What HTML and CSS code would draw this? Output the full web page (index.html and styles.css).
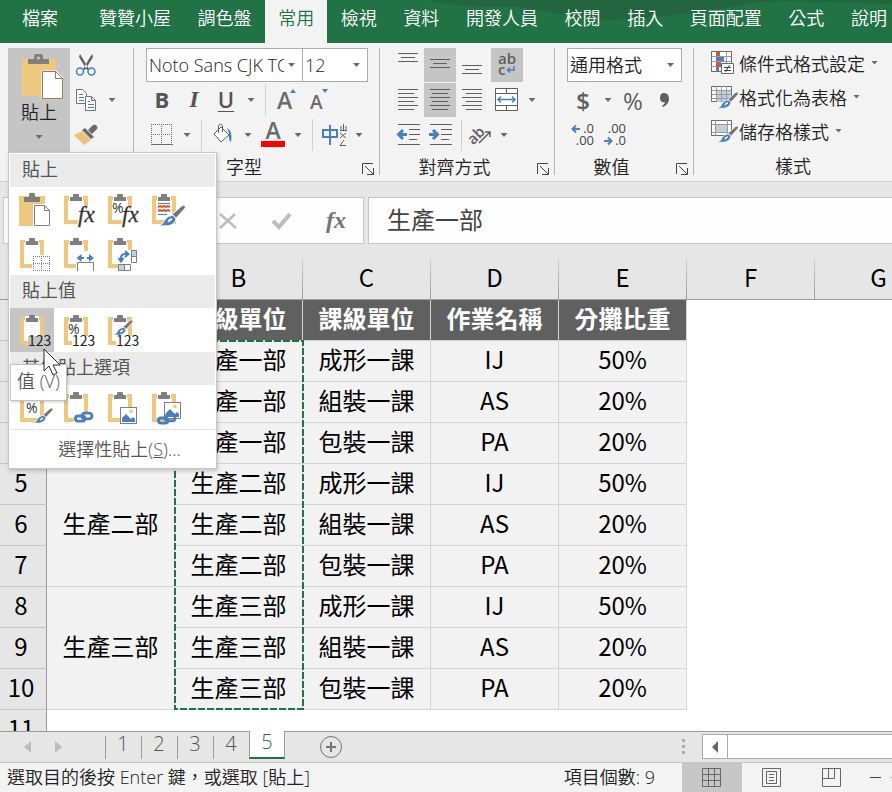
FILE: index.html
```html
<!DOCTYPE html>
<html lang="zh-Hant">

<head>
    <meta charset="UTF-8">
    <meta name="viewport" content="width=device-width, initial-scale=1.0">
    <title>Excel</title>
    <link rel="stylesheet" href="styles.css">
</head>

<body>
    <!-- shared icon parts -->
    <svg class="defs" aria-hidden="true">
        <defs>
            <g id="board">
                <path d="M12 11v24h20V11z" fill="none" stroke="#edc87e" stroke-width="4" />
                <path d="M15 8h14v7H15z" fill="#fff" />
                <path d="M16 14v-4h3V8q0-1 1-1h4q1 0 1 1v2h3v4z" fill="#7f7f7f" />
            </g>
            <g id="brush">
                <path d="M29 1l1 3L20 15l-4-4L26 2z" fill="#757575" stroke="#fff" />
                <path d="M16 12q3 0 4 4-2 6-9 7H1q6-2 7-6 3-5 8-5z" fill="#4a7fba" stroke="#fff" />
                <path d="M12 19q1-3 4-3" fill="none" stroke="#fff" stroke-width="2" />
            </g>
            <g id="chain" fill="none" stroke="#4a7fba" stroke-width="4">
                <rect x="2" y="7" width="13" height="7" rx="3.5" />
                <rect x="11" y="3" width="14" height="8" rx="4" />
            </g>
            <g id="picture">
                <rect x=".5" y=".5" width="16" height="16" fill="#fff" stroke="#7f7f7f" />
                <circle cx="11" cy="4.500" r="1.800" fill="#edc87e" />
                <path d="M2 15v-4l4-4 5 5 2-2 2 2v3z" fill="#4a7fba" />
            </g>
        </defs>
    </svg>

    <header class="tabs">
        <svg class="tabs-art" viewBox="0 0 492 43" preserveAspectRatio="none" aria-hidden="true">
            <path d="M28 0Q50 8 120 7l35 6q25 7 60 7 75-6 110-12 20-6 65-7l102 3V0z" fill="#22653f" />
        </svg>
        <a class="tab file" href="#">檔案</a>
        <nav class="tab-list">
            <a class="tab" href="#">贊贊小屋</a>
            <a class="tab" href="#">調色盤</a>
            <a class="tab active" href="#">常用</a>
            <a class="tab" href="#">檢視</a>
            <a class="tab" href="#">資料</a>
            <a class="tab" href="#">開發人員</a>
            <a class="tab" href="#">校閱</a>
            <a class="tab" href="#">插入</a>
            <a class="tab" href="#">頁面配置</a>
            <a class="tab" href="#">公式</a>
            <a class="tab" href="#">說明</a>
        </nav>
    </header>

    <section class="ribbon">
        <div class="group clipboard">
            <div class="paste-wrap">
                <button class="paste" aria-expanded="true">
                    <svg width="34" height="46" viewBox="0 0 34 46">
                        <path d="M0 5h34v37H0z" fill="#edc87e" />
                        <path d="M6 10V5h6V2q0-2 2-2h5q2 0 2 2v3h6v5z" fill="#7f7f7f" />
                        <circle cx="16.500" cy="4" r="1.500" fill="#edc87e" />
                        <path d="M19 16h15l7 7v22H19z" fill="#fff" stroke="#f3c785" />
                        <path d="M20.500 17.500h13l7 7v20h-20zM33.500 17.500v7h7" fill="#fff" stroke="#7f7f7f" />
                    </svg>
                    <span>貼上</span>
                    <i class="arrow"></i>
                </button>

                <div class="menu">
                    <h3>貼上</h3>
                    <div class="options">
                        <button aria-label="貼上"><svg width="44" height="44">
                            <path d="M9 9h26v30H9z" fill="#edc87e" />
                            <path d="M14 15v-5h5V7q0-1 1-1h4q1 0 1 1v3h5v5z" fill="#7f7f7f" />
                            <path d="M23 17h13l5 5v19H23z" fill="#fff" />
                            <path d="M24.500 18.500h10l5 5v15h-15z" fill="#fff" stroke="#7f7f7f" />
                            <path d="M34.500 18.500v5h5" fill="none" stroke="#7f7f7f" />
                        </svg></button>
                        <button aria-label="公式"><svg width="44" height="44">
                            <use href="#board" /><path d="M26 19h14v20H23z" fill="#fff" />
                            <text x="24" y="35" class="fx">fx</text>
                        </svg></button>
                        <button aria-label="公式與數字格式設定"><svg width="44" height="44">
                            <use href="#board" /><path d="M26 19h14v20H23z" fill="#fff" />
                            <text x="14" y="26" class="pct">%</text><text x="24" y="35" class="fx">fx</text>
                        </svg></button>
                        <button aria-label="保持來源格式設定"><svg width="44" height="44">
                            <use href="#board" />
                            <path d="M16 16.500h12M16 27.500h9" stroke="#4a7fba" />
                            <path d="M16 20l2-1 2 1 2-1 2 1 2-1 2 1M16 24l2-1 2 1 2-1 2 1 2-1 2 1" fill="none" stroke="#d6532f" stroke-width="2" />
                            <g transform="translate(15 17) scale(.95)"><use href="#brush" /></g>
                        </svg></button>
                        <button aria-label="無框線"><svg width="44" height="44">
                            <use href="#board" /><path d="M22 24h18v18H22z" fill="#fff" />
                            <path d="M23 25.500h17M23 32.500h17M23 39.500h17M23.500 25v15M31.500 25v15M39.500 25v15" stroke="#7f7f7f" stroke-dasharray="1 1" />
                        </svg></button>
                        <button aria-label="保持來源欄寬"><svg width="44" height="44">
                            <use href="#board" /><path d="M22 20h18v20H22z" fill="#fff" />
                            <path d="M23.500 40V31.500h16V40" fill="none" stroke="#7f7f7f" />
                            <path d="M25 27h5M33 27h5" stroke="#4a7fba" stroke-width="2" />
                            <path d="M22.500 27l5-4v8zM40 27l-5-4v8z" fill="#4a7fba" />
                        </svg></button>
                        <button aria-label="轉置"><svg width="44" height="44">
                            <use href="#board" /><path d="M20 19h18v22H20z" fill="#fff" />
                            <path d="M33.500 19.500h5v12h-5zM20.500 33.500h12v6h-12z" fill="#fff" stroke="#7f7f7f" />
                            <path d="M33.500 19.500h5v6h-5zM20.500 33.500h6v6h-6z" fill="#bdd0e6" stroke="#7f7f7f" />
                            <path d="M23 30v-3q0-4 4-4h2M20.500 27l2.500 3.500 2.500-3.500M27 20l3.500 3-3.500 3" fill="none" stroke="#4a7fba" stroke-width="2" />
                        </svg></button>
                    </div>
                    <h3>貼上值</h3>
                    <div class="options">
                        <button class="on" aria-label="值"><svg width="44" height="44">
                            <path d="M14 13h16v22H14z" fill="#fff" /><use href="#board" /><path d="M18 28h24v12H18z" fill="#c5c5c5" />
                            <text x="18" y="38" class="num">123</text>
                        </svg></button>
                        <button aria-label="值與數字格式"><svg width="44" height="44">
                            <use href="#board" /><path d="M18 28h24v12H18z" fill="#fff" />
                            <text x="14" y="26" class="pct">%</text><text x="18" y="38" class="num">123</text>
                        </svg></button>
                        <button aria-label="值與來源格式"><svg width="44" height="44">
                            <use href="#board" /><path d="M18 28h24v12H18z" fill="#fff" />
                            <g transform="translate(14 11) scale(.7)"><use href="#brush" /></g>
                            <text x="18" y="38" class="num">123</text>
                        </svg></button>
                    </div>
                    <h3>其他貼上選項</h3>
                    <div class="options">
                        <button aria-label="設定格式"><svg width="44" height="44">
                            <use href="#board" /><text x="16" y="28" class="pct">%</text>
                            <g transform="translate(22 22) scale(.7)"><use href="#brush" /></g>
                        </svg></button>
                        <button aria-label="貼上連結"><svg width="44" height="44">
                            <use href="#board" /><path d="M20 27h20v13H20z" fill="#fff" />
                            <g transform="translate(20 26) scale(.72)"><use href="#chain" /></g>
                        </svg></button>
                        <button aria-label="圖片"><svg width="44" height="44">
                            <use href="#board" /><use href="#picture" x="22" y="22" />
                        </svg></button>
                        <button aria-label="連結的圖片"><svg width="44" height="44">
                            <use href="#board" /><use href="#picture" x="22" y="17" />
                            <g transform="translate(15 28) scale(.72)"><use href="#chain" /></g>
                        </svg></button>
                    </div>
                    <button class="special">選擇性貼上(<u>S</u>)...</button>
                    <div class="tooltip" role="tooltip">值 (V)</div>
                    <svg class="cursor" width="20" height="30" viewBox="0 0 20 30">
                        <path d="M1 1v22l5-5 4 9 4-2-4-8h7z" fill="#fff" stroke="#222831" />
                    </svg>
                </div>
            </div>
            <div class="clip-tools">
                <div class="row">
                    <button class="mini" aria-label="剪下"><svg width="22" height="22" viewBox="0 0 22 22">
                        <path d="M5 0l9 15-2 1L4 3zM17 0L8 15l2 1 8-13z" fill="#5f5f5f" />
                        <circle cx="5" cy="17.500" r="3.500" fill="none" stroke="#4a7fba" stroke-width="1.500" />
                        <circle cx="16.500" cy="17.500" r="3.500" fill="none" stroke="#4a7fba" stroke-width="1.500" />
                    </svg></button>
                </div>
                <div class="row">
                    <button class="mini" aria-label="複製"><svg width="22" height="22" viewBox="0 0 22 22">
                        <path d="M1.500.5h6l4 4v10h-10z" fill="#fff" stroke="#757575" />
                        <path d="M4 5.500h4M4 8.500h5M4 11.500h5" stroke="#4a7fba" />
                        <path d="M10.500 7.500h6l4 4v10h-10zM16.500 7.500v4h4" fill="#fff" stroke="#757575" />
                        <path d="M13 12.500h2M13 15.500h6M13 18.500h6" stroke="#4a7fba" />
                    </svg></button>
                    <button class="drop" aria-label="複製選項"><i class="arrow"></i></button>
                </div>
                <div class="row">
                    <button class="mini" aria-label="複製格式"><svg width="24" height="22" viewBox="0 0 24 22">
                        <path d="M0 11l8-4 9 9-7 5z" fill="#edc07c" />
                        <path d="M8 6l3-2 9 9-3 2zM14 6l5-5q2-1 4 1 1 2 0 3l-5 5z" fill="#6a6a6a" />
                    </svg></button>
                </div>
            </div>
        </div>

        <div class="group font">
            <div class="row">
                <span class="select name"><select aria-label="字型"><option>Noto Sans CJK TC Regular</option></select></span>
                <span class="select size"><select aria-label="字型大小"><option>12</option></select></span>
            </div>
            <div class="row">
                <button class="tool bold">B</button>
                <button class="tool italic">I</button>
                <button class="tool underline">U</button>
                <button class="drop" aria-label="底線選項"><i class="arrow"></i></button>
                <i class="sep"></i>
                <button class="tool" aria-label="放大字型"><svg width="24" height="24">
                    <text x="2" y="21" font-size="23" class="letter">A</text><path d="M15 5l3-4 3 4z" fill="#4a7fba" />
                </svg></button>
                <button class="tool" aria-label="縮小字型"><svg width="24" height="24">
                    <text x="3" y="21" font-size="19" class="letter">A</text><path d="M15 1h6l-3 4z" fill="#4a7fba" />
                </svg></button>
            </div>
            <div class="row">
                <button class="tool" aria-label="框線"><svg width="22" height="22">
                    <path d="M0 .5h22M0 10.500h22M.5 0v20M10.500 0v20M20.500 0v20" stroke="#6a6a6a" stroke-dasharray="1 1" />
                    <path d="M0 20.500h22" stroke="#6a6a6a" />
                </svg></button>
                <button class="drop" aria-label="框線選項"><i class="arrow"></i></button>
                <i class="sep"></i>
                <button class="tool" aria-label="填滿色彩"><svg width="20" height="24" viewBox="0 0 20 24">
                    <path d="M14 5q6 3 4 14-3-2-2-9z" fill="#4a7fba" />
                    <path d="M8 4l8 8-8 7-7-8z" fill="#fff" stroke="#5f5f5f" /><path d="M5.500 10V3q2-4 4 0v6" fill="none" stroke="#5f5f5f" />
                </svg></button>
                <button class="drop" aria-label="填滿色彩選項"><i class="arrow"></i></button>
                <button class="tool" aria-label="字型色彩"><svg width="24" height="24">
                    <text x="12" y="16" font-size="23" text-anchor="middle" class="letter">A</text><path d="M0 18h24v6H0z" fill="#f00" />
                </svg></button>
                <button class="drop" aria-label="字型色彩選項"><i class="arrow"></i></button>
                <i class="sep"></i>
                <button class="tool" aria-label="注音標示"><svg width="26" height="24">
                    <path d="M2 7h14v7H2zM9 2v20" fill="none" stroke="#4a7fba" stroke-width="2" />
                    <path d="M19 7.500h7M20 3v4M22.500 1v6M25 3v4M19 10l6 5M25 10l-6 5M23 17l-4 5.500h6" fill="none" stroke="#5f5f5f" />
                </svg></button>
                <button class="drop" aria-label="注音選項"><i class="arrow"></i></button>
            </div>
            <div class="caption"><span>字型</span><button class="launch" aria-label="字型設定"><svg width="12" height="12"><path d="M.5 11V.5H11M3 3l8 8M11.500 5v6.500H5" fill="none" stroke="#444" /></svg></button></div>
        </div>

        <div class="group align">
            <div class="row">
                <button class="tool" aria-label="靠上對齊"><svg width="20" height="24"><path d="M0 .5h20M3 4.500h14M0 8.500h20" stroke="#5f5f5f" /></svg></button>
                <button class="tool on" aria-label="置中對齊"><svg width="20" height="24"><path d="M0 6.500h20M3 10.500h14M0 14.500h20" stroke="#5f5f5f" /></svg></button>
                <button class="tool" aria-label="靠下對齊"><svg width="20" height="24"><path d="M0 12.500h20M3 16.500h14M0 20.500h20" stroke="#5f5f5f" /></svg></button>
                <button class="tool on wrap" aria-label="自動換行"><svg width="20" height="24">
                    <text x="1" y="11" class="small">ab</text><text x="1" y="22" class="small">c</text>
                    <path d="M17 13v4h-6M13 14.500L10.500 17l2.500 2.500" fill="none" stroke="#4a7fba" stroke-width="1.500" />
                </svg></button>
            </div>
            <div class="row">
                <button class="tool" aria-label="靠左對齊"><svg width="20" height="22"><path d="M0 .5h20M0 4.500h16M0 8.500h20M0 12.500h16M0 16.500h20M0 20.500h16" stroke="#5f5f5f" /></svg></button>
                <button class="tool on" aria-label="置中"><svg width="20" height="22"><path d="M0 .5h20M2 4.500h16M0 8.500h20M2 12.500h16M0 16.500h20M2 20.500h16" stroke="#5f5f5f" /></svg></button>
                <button class="tool" aria-label="靠右對齊"><svg width="20" height="22"><path d="M0 .5h20M4 4.500h16M0 8.500h20M4 12.500h16M0 16.500h20M4 20.500h16" stroke="#5f5f5f" /></svg></button>
                <button class="tool wrap" aria-label="跨欄置中"><svg width="24" height="24">
                    <path d="M.5.5h22v22H.5zM.5 5.500h22M.5 17.500h22M11.500 .5v5M11.500 17.500v5" fill="#fff" stroke="#5f5f5f" />
                    <path d="M3 11.500h17M6 8.500l-3 3 3 3M17 8.500l3 3-3 3" fill="none" stroke="#4a7fba" stroke-width="1.500" />
                </svg></button>
                <button class="drop" aria-label="跨欄置中選項"><i class="arrow"></i></button>
            </div>
            <div class="row">
                <button class="tool" aria-label="減少縮排"><svg width="23" height="22">
                    <path d="M1 .5h22M12 5.500h11M12 10.500h11M12 15.500h8M1 20.500h22" stroke="#5f5f5f" />
                    <path d="M10 10.500H2M6 6l-4.500 4.500L6 15" fill="none" stroke="#4a7fba" stroke-width="3" />
                </svg></button>
                <button class="tool" aria-label="增加縮排"><svg width="23" height="22">
                    <path d="M1 .5h22M12 5.500h11M12 10.500h11M12 15.500h8M1 20.500h22" stroke="#5f5f5f" />
                    <path d="M0 10.500h8M4 6l4.500 4.500L4 15" fill="none" stroke="#4a7fba" stroke-width="3" />
                </svg></button>
                <i class="sep"></i>
                <button class="tool narrow" aria-label="方向"><svg width="22" height="24">
                    <text x="-2" y="18" class="small" transform="rotate(-45 6 14)">ab</text>
                    <path d="M9 20L20 9M15 9h5v5" fill="none" stroke="#5f5f5f" stroke-width="1.500" />
                </svg></button>
                <button class="drop" aria-label="方向選項"><i class="arrow"></i></button>
            </div>
            <div class="caption"><span>對齊方式</span><button class="launch" aria-label="對齊設定"><svg width="12" height="12"><path d="M.5 11V.5H11M3 3l8 8M11.500 5v6.500H5" fill="none" stroke="#444" /></svg></button></div>
        </div>

        <div class="group number">
            <div class="row">
                <span class="select format"><select aria-label="數值格式"><option>通用格式</option></select></span>
            </div>
            <div class="row">
                <button class="tool symbol strong">$</button>
                <button class="drop" aria-label="會計格式選項"><i class="arrow"></i></button>
                <button class="tool symbol">%</button>
                <button class="tool" aria-label="千分位樣式"><svg width="12" height="18"><path d="M5 2q5 0 5 6 0 5-6 8l-1-1q3-2 3-4-5 1-5-4 0-5 4-5z" fill="#5f5f5f" /></svg></button>
            </div>
            <div class="row">
                <button class="tool" aria-label="增加小數位數"><svg width="24" height="24">
                    <text x="23" y="10" text-anchor="end" class="dec">.0</text><text x="23" y="22" text-anchor="end" class="dec">.00</text>
                    <path d="M9 6H2M5 2.500L1.500 6 5 9.500" fill="none" stroke="#4a7fba" stroke-width="2" />
                </svg></button>
                <button class="tool" aria-label="減少小數位數"><svg width="24" height="24">
                    <text x="23" y="10" text-anchor="end" class="dec">.00</text><text x="23" y="22" text-anchor="end" class="dec">.0</text>
                    <path d="M1 18h7M5 14.500L8.500 18 5 21.500" fill="none" stroke="#4a7fba" stroke-width="2" />
                </svg></button>
            </div>
            <div class="caption"><span>數值</span><button class="launch" aria-label="數值設定"><svg width="12" height="12"><path d="M.5 11V.5H11M3 3l8 8M11.500 5v6.500H5" fill="none" stroke="#444" /></svg></button></div>
        </div>

        <div class="group styles">
            <button class="style"><svg width="24" height="24">
                <path d="M.5.5h20v20H.5z" fill="#fff" stroke="#6a6a6a" />
                <path d="M.5 5.500h20M.5 10.500h20M.5 15.500h20M5.500.5v20M15.500.5v20" stroke="#9a9a9a" />
                <path d="M5 1h4v4H5zM5 11h5v5H5z" fill="#d6532f" /><path d="M5 6h8v4H5zM5 16h3v4H5z" fill="#4a7fba" />
                <path d="M10.500 12.500h12v10h-12z" fill="#fff" stroke="#6a6a6a" /><path d="M13 16.500h7M13 19.500h7M18.500 14l-4 7" stroke="#444" />
            </svg>條件式格式設定<i class="arrow"></i></button>
            <button class="style"><svg width="24" height="24">
                <path d="M.5 1.500h20v15H.5z" fill="#fff" stroke="#6a6a6a" /><path d="M5 5h15v12H5z" fill="#bdd0e6" />
                <path d="M.5 5.500h20M.5 9.500h20M.5 13.500h20M5.500 1v16M10.500 1v16M15.500 1v16" stroke="#9a9a9a" />
                <g transform="translate(5 6) scale(.75)"><use href="#brush" /></g>
            </svg>格式化為表格<i class="arrow"></i></button>
            <button class="style"><svg width="24" height="24">
                <path d="M.5 1.500h20v15H.5z" fill="#fff" stroke="#6a6a6a" /><path d="M5 6h11v7H5z" fill="#bdd0e6" />
                <path d="M.5 5.500h20M.5 13.500h20M4.500 1v16M16.500 1v16" stroke="#9a9a9a" />
                <g transform="translate(5 6) scale(.75)"><use href="#brush" /></g>
            </svg>儲存格樣式<i class="arrow"></i></button>
            <div class="caption"><span>樣式</span></div>
        </div>
    </section>

    <section class="formula-bar">
        <input class="name-box" aria-label="名稱方塊">
        <div class="formula-tools">
            <button aria-label="取消"><svg width="18" height="16"><path d="M1 1l16 14M16 1L1 15" stroke="#bdbdbd" stroke-width="2.500" /></svg></button>
            <button aria-label="輸入"><svg width="20" height="18"><path d="M1 9l6 6L18 2" fill="none" stroke="#bdbdbd" stroke-width="4" /></svg></button>
            <button class="insert-fx" aria-label="插入函數">fx</button>
        </div>
        <input class="formula" aria-label="資料編輯列" value="生產一部">
    </section>

    <main class="sheet">
        <table>
            <thead>
                <tr><th class="rowhead"></th><th>A</th><th>B</th><th>C</th><th>D</th><th>E</th><th>F</th><th>G</th></tr>
            </thead>
            <tbody>
                <tr class="title"><th class="rowhead">1</th><td>部級單位</td><td>組級單位</td><td>課級單位</td><td>作業名稱</td><td>分攤比重</td></tr>
                <tr><th class="rowhead">2</th><td rowspan="3">生產一部</td><td class="copied">生產一部<svg class="ants" width="130" height="370"><rect x="1" y="1" width="128" height="368" fill="none" stroke="#217346" stroke-width="2" stroke-dasharray="7 2" /></svg></td><td>成形一課</td><td>IJ</td><td>50%</td></tr>
                <tr><th class="rowhead">3</th><td>生產一部</td><td>組裝一課</td><td>AS</td><td>20%</td></tr>
                <tr><th class="rowhead">4</th><td>生產一部</td><td>包裝一課</td><td>PA</td><td>20%</td></tr>
                <tr><th class="rowhead">5</th><td rowspan="3">生產二部</td><td>生產二部</td><td>成形一課</td><td>IJ</td><td>50%</td></tr>
                <tr><th class="rowhead">6</th><td>生產二部</td><td>組裝一課</td><td>AS</td><td>20%</td></tr>
                <tr><th class="rowhead">7</th><td>生產二部</td><td>包裝一課</td><td>PA</td><td>20%</td></tr>
                <tr><th class="rowhead">8</th><td rowspan="3">生產三部</td><td>生產三部</td><td>成形一課</td><td>IJ</td><td>50%</td></tr>
                <tr><th class="rowhead">9</th><td>生產三部</td><td>組裝一課</td><td>AS</td><td>20%</td></tr>
                <tr><th class="rowhead">10</th><td>生產三部</td><td>包裝一課</td><td>PA</td><td>20%</td></tr>
                <tr><th class="rowhead">11</th></tr>
            </tbody>
        </table>
    </main>

    <footer>
        <div class="sheet-bar">
            <button class="nav" aria-label="上一張"><svg width="7" height="12"><path d="M7 0v12L0 6z" fill="#bdbdbd" /></svg></button>
            <button class="nav" aria-label="下一張"><svg width="7" height="12"><path d="M0 0v12l7-6z" fill="#bdbdbd" /></svg></button>
            <div class="sheets">
                <button>1</button><button>2</button><button>3</button><button>4</button><button class="current">5</button>
            </div>
            <button class="add" aria-label="新工作表"><svg width="24" height="24"><circle cx="12" cy="12" r="10.500" fill="none" stroke="#757575" /><path d="M12 7v10M7 12h10" stroke="#757575" stroke-width="2" /></svg></button>
            <svg class="grip" width="3" height="16"><path d="M0 0h3v3H0zM0 6h3v3H0zM0 12h3v3H0z" fill="#ababab" /></svg>
            <div class="scroll">
                <button aria-label="向左捲動"><svg width="6" height="12"><path d="M6 0v12L0 6z" fill="#666" /></svg></button>
                <div class="track"></div>
            </div>
        </div>
        <div class="status-bar">
            <span class="message">選取目的後按 Enter 鍵，或選取 [貼上]</span>
            <span class="count">項目個數: 9</span>
            <button class="view on" aria-label="標準模式"><svg width="20" height="20"><path d="M.5.5h18v18H.5zM6.500.5v18M12.500.5v18M.5 6.500h18M.5 12.500h18" fill="none" stroke="#666" /></svg></button>
            <button class="view" aria-label="整頁模式"><svg width="20" height="20"><path d="M.5.5h18v18H.5zM4.500 3.500h10v12h-10zM7 6.500h5M7 9.500h5M7 12.500h5" fill="none" stroke="#666" /></svg></button>
            <button class="view" aria-label="分頁預覽"><svg width="20" height="20"><path d="M.5.5h18v18H.5zM.5 10.500h12v-10M6.500.5v10" fill="none" stroke="#666" /></svg></button>
            <button class="zoom-out" aria-label="縮小"><svg width="11" height="2"><path d="M0 .5h11" stroke="#444" /></svg></button>
            <i class="zoom-track"></i>
        </div>
    </footer>
</body>

</html>
```
FILE: styles.css
```css
* {
    box-sizing: border-box;
}

body {
    margin: 0;
    height: 100vh;
    display: flex;
    flex-direction: column;
    overflow: hidden;
    background: #e6e6e6;
    color: #222;
    font-family: "Open Sans", "Noto Sans CJK TC", sans-serif;
    font-weight: 350;
    font-size: 18px;
}

button,
input,
select {
    font: inherit;
    color: inherit;
    border: 0;
    padding: 0;
    margin: 0;
    background: none;
}

svg {
    display: block;
    flex: none;
    overflow: visible;
}

.defs {
    position: absolute;
    width: 0;
    height: 0;
    overflow: hidden;
}

/* tabs */
.tabs {
    position: relative;
    display: flex;
    height: 43px;
    flex: none;
    background: #217346;
}

.tabs-art {
    position: absolute;
    right: 0;
    top: 0;
    width: 55%;
    height: 43px;
}

.tab-list {
    flex: 1;
    display: flex;
    justify-content: space-between;
    padding-right: 5px;
}

.tab {
    position: relative;
    padding: 0 13px;
    line-height: 36px;
    color: #fff;
    text-decoration: none;
    white-space: nowrap;
}

.tab:last-child {
    padding-right: 0;
}

.tab.file {
    padding: 0 28px 0 22px;
}

.tab.active {
    background: #f3f3f3;
    color: #217346;
}

/* ribbon */
.ribbon {
    display: flex;
    flex: none;
    height: 139px;
    padding-top: 5px;
    background: #f3f3f3;
    border-bottom: 1px solid #d2d2d2;
}

.group {
    display: flex;
    flex-direction: column;
    gap: 1px;
    height: 127px;
    flex: none;
    padding-left: 12px;
    border-right: 1px solid #b5b5b5;
}

.group.clipboard {
    flex-direction: row;
    width: 134px;
    padding-left: 8px;
}

.group.font {
    width: 246px;
}

.group.align {
    width: 175px;
}

.group.number {
    width: 139px;
}

.group.styles {
    flex: 1 0 198px;
    padding-left: 17px;
    border-right: 0;
}

.row {
    display: flex;
    align-items: center;
    height: 34px;
}

.tool,
.drop,
.mini {
    display: flex;
    align-items: center;
    justify-content: center;
    height: 34px;
}

.tool {
    width: 32px;
}

.tool.narrow {
    width: 28px;
}

.drop {
    width: 18px;
}

.tool.on {
    background: #c5c5c5;
}

.tool.wrap {
    margin-left: 3px;
}

.arrow {
    width: 7px;
    height: 4px;
    flex: none;
    background: #6a6a6a;
    clip-path: polygon(0 0, 100% 0, 50% 100%);
}

.sep {
    width: 1px;
    height: 32px;
    margin: 0 5px;
    background: #d0d0d0;
}

.caption {
    display: flex;
    height: 23px;
    margin-top: -1px;
    line-height: 30px;
}

.caption span {
    flex: 1;
    text-align: center;
}

.font .caption,
.align .caption,
.number .caption {
    margin-left: -12px;
}

.launch {
    width: 25px;
    padding: 11px 0 0 8px;
}

.styles .caption {
    margin-left: -17px;
    margin-top: 1px;
}

.paste-wrap {
    position: relative;
}

.paste {
    display: flex;
    flex-direction: column;
    align-items: center;
    width: 62px;
    height: 106px;
    padding-top: 6px;
    line-height: 24px;
    background: #c5c5c5;
}

.paste .arrow {
    margin-top: 11px;
}

.clip-tools {
    display: flex;
    flex-direction: column;
    gap: 1px;
    padding-left: 3px;
}

.mini {
    width: 24px;
}

.mini + .drop {
    width: 28px;
}

.select {
    position: relative;
    display: flex;
    height: 34px;
}

.select select {
    width: 100%;
    padding: 0 18px 0 2px;
    appearance: none;
    border: 1px solid #ababab;
    border-radius: 0;
    background: #fff;
    color: #222;
}

.select::after {
    content: "";
    position: absolute;
    right: 8px;
    top: 15px;
    width: 7px;
    height: 4px;
    background: #6a6a6a;
    clip-path: polygon(0 0, 100% 0, 50% 100%);
}

.select.name {
    width: 157px;
}

.select.size {
    width: 66px;
    margin-left: -1px;
}

.select.format {
    width: 115px;
}

.bold,
.italic,
.underline {
    font-size: 22px;
    font-weight: 700;
    line-height: 30px;
    padding-bottom: 2px;
    color: #555;
}

.bold,
.underline {
    font-family: "Open Sans", sans-serif;
}

.italic {
    font-family: "Liberation Serif", serif;
    font-size: 24px;
    font-style: italic;
}

.underline {
    text-decoration: underline;
    text-decoration-thickness: 1px;
    text-underline-offset: 3px;
    font-weight: 600;
}

.symbol {
    font-family: "Open Sans", sans-serif;
    font-size: 24px;
    font-weight: 400;
    color: #5f5f5f;
}

.symbol.strong {
    font-weight: 600;
}

.letter {
    font-family: "Open Sans", sans-serif;
    font-weight: 600;
    fill: #6a6a6a;
}

.small {
    font: 600 15px "Open Sans", sans-serif;
    fill: #5f5f5f;
}

.dec {
    font: 400 13px "Open Sans", sans-serif;
    fill: #444;
}

.style {
    display: flex;
    align-items: center;
    height: 34px;
    margin-top: -1px;
    padding-bottom: 3px;
    white-space: nowrap;
}

.style svg {
    margin-right: 4px;
}

.style .arrow {
    margin-left: 6px;
}

/* paste menu */
.menu {
    position: absolute;
    z-index: 5;
    left: 0;
    top: 104px;
    width: 209px;
    padding: 1px;
    background: #fff;
    border: 1px solid #c6c6c6;
    box-shadow: 1px 2px 4px rgba(0, 0, 0, .2);
    color: #555;
}

.menu h3 {
    margin: 0;
    padding: 0 0 3px 12px;
    font-size: 18px;
    font-weight: 400;
    line-height: 30px;
    background: #ebebeb;
}

.options {
    display: flex;
    flex-wrap: wrap;
}

.options .on {
    background: #c5c5c5;
}

.fx {
    font: italic 400 23px "Liberation Serif", serif;
    fill: #333;
    stroke: #333;
    stroke-width: .3px;
}

.pct {
    font: 400 14px "Open Sans", sans-serif;
    fill: #333;
}

.num {
    font: 400 14px "Noto Sans CJK TC", sans-serif;
    fill: #222;
}

.special {
    display: block;
    width: 100%;
    height: 38px;
    padding: 0 0 2px 14px;
    border-top: 1px solid #e1e1e1;
}

.tooltip {
    position: absolute;
    left: 1px;
    top: 211px;
    padding: 0 6px 2px;
    line-height: 33px;
    white-space: nowrap;
    background: #fff;
    border: 1px solid #c3c3c3;
    box-shadow: 1px 1px 3px rgba(0, 0, 0, .2);
}

.cursor {
    position: absolute;
    left: 34px;
    top: 195px;
}

/* formula bar */
.formula-bar {
    display: flex;
    flex: none;
    padding: 15px 0 15px 3px;
}

.formula-bar > * {
    height: 47px;
    background: #fdfdfd;
    border: 1px solid #c6c6c6;
}

.name-box {
    width: 180px;
}

.formula-tools {
    display: flex;
    width: 177px;
    margin-left: 4px;
    padding-left: 13px;
}

.formula-tools button {
    display: flex;
    align-items: center;
    justify-content: center;
    width: 54px;
}

.formula-tools .insert-fx {
    font: italic 700 24px "Liberation Serif", serif;
    color: #757575;
}

.formula-bar .formula {
    flex: 1;
    min-width: 0;
    margin-left: 4px;
    padding: 0 0 4px 18px;
    border-right: 0;
    font-size: 24px;
    font-weight: 400;
    color: #444;
}

/* sheet */
.sheet {
    flex: 1;
    min-height: 0;
    overflow: hidden;
    background: linear-gradient(#e6e6e6 41px, #fff 41px);
}

table {
    table-layout: fixed;
    width: 943px;
    border-collapse: separate;
    border-spacing: 0;
    font-family: "Noto Sans CJK TC", sans-serif;
    font-size: 24px;
    font-weight: 400;
    line-height: 36px;
    color: #000;
}

th,
td {
    height: 41px;
    padding: 0 0 4px;
    text-align: center;
    font-weight: 400;
    white-space: nowrap;
}

thead th {
    border-right: 1px solid;
    border-bottom: 1px solid;
    border-image: linear-gradient(#d0d0d0, #9b9b9b) 1;
}

th.rowhead {
    width: 47px;
    padding-right: 4px;
    background: #e6e6e6;
    border-right: 1px solid #9b9b9b;
    border-bottom: 1px solid #c6c6c6;
}

td {
    background: #f2f2f2;
    border-right: 1px solid #d4d4d4;
    border-bottom: 1px solid #d4d4d4;
}

.title td {
    background: #606060;
    color: #fff;
    font-weight: 700;
}

.copied {
    position: relative;
}

.ants {
    position: absolute;
    z-index: 1;
    left: -1px;
    top: -1px;
}

/* bottom bars */
.sheet-bar {
    display: flex;
    height: 31px;
    padding-left: 12px;
    border-top: 1px solid #9b9b9b;
    background: #e6e6e6;
}

.nav {
    width: 31px;
}

.nav svg {
    margin: auto;
}

.sheets {
    display: flex;
    height: 28px;
    margin: -1px 0 0 31px;
}

.sheets button {
    width: 36px;
    font-size: 20px;
    line-height: 22px;
    color: #555;
    padding-bottom: 4px;
    background: linear-gradient(#9b9b9b, #9b9b9b) 0 4px / 1px 24px no-repeat;
    border-top: 1px solid #9b9b9b;
}

.sheets .current {
    background: #fff;
    color: #217346;
    border: 1px solid #9b9b9b;
    border-top: 0;
    border-bottom: 2px solid #217346;
}

.add {
    margin: 3px 0 0 34px;
    height: 24px;
}

.grip {
    margin: 7px 17px 0 auto;
}

.scroll {
    display: flex;
    width: 190px;
    height: 25px;
    margin-top: 2px;
    background: #fff;
    border: 1px solid #ababab;
    border-right: 0;
}

.scroll button {
    width: 25px;
    border-right: 1px solid #ababab;
}

.scroll button svg {
    margin: auto;
}

.status-bar {
    display: flex;
    height: 30px;
    padding-left: 7px;
    line-height: 28px;
    border-top: 1px solid #c6c6c6;
    background: #f3f3f3;
    white-space: nowrap;
}

.count {
    margin-left: auto;
    margin-right: 27px;
}

.view {
    width: 60px;
}

.view.on {
    background: #c6c6c6;
}

.view svg,
.zoom-out svg {
    margin: auto;
}

.zoom-out {
    margin-left: 8px;
    width: 11px;
}

.zoom-track {
    width: 2px;
    height: 1px;
    margin: 14px 0 0 9px;
    background: #ababab;
}
```
